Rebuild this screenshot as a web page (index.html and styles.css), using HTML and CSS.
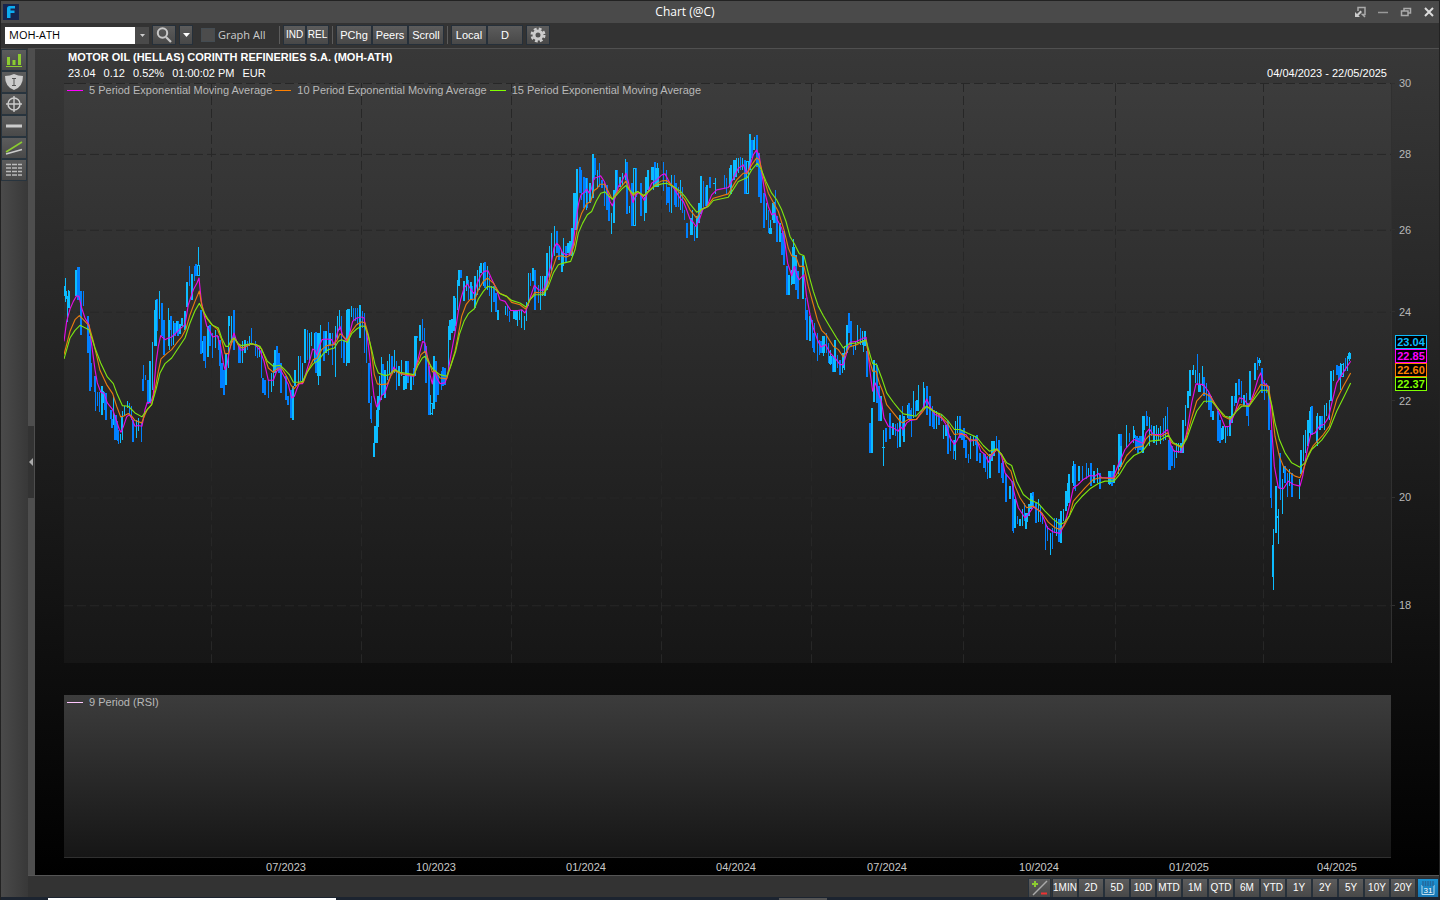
FILE: index.html
```html
<!DOCTYPE html>
<html lang="en">
<head>
<meta charset="utf-8">
<title>Chart (@C)</title>
<link rel="stylesheet" href="styles.css">
</head>
<body>
<div class="window">
  <header class="titlebar">
    <svg class="logo" viewBox="0 0 16 16" aria-hidden="true"><rect width="16" height="16" fill="#17244d"/><path d="M4 14V4.500Q4 2 6.500 2H12V4.500H7.500V6.500H11.500V9H7.500V14Z" fill="#0cabf0"/></svg>
    <h1 class="title">Chart (@C)</h1>
    <div class="window-actions">
      <button class="win-btn" aria-label="Dock"><svg viewBox="0 0 12 12"><path d="M4 5V1.500H11V8.500H8.500L11 11" fill="none" stroke="#aaa" stroke-width="1.500"/><path d="M1 6V11H6L4.500 9.500L8 6L6.500 4.500L3 8Z" fill="#ccc"/></svg></button>
      <button class="win-btn" aria-label="Minimize"><svg viewBox="0 0 12 12"><path d="M1 6.500H11" stroke="#999" stroke-width="1.500"/></svg></button>
      <button class="win-btn" aria-label="Restore"><svg viewBox="0 0 12 12"><path d="M4 4.500V2.500H10.500V7H8.500M1.500 5H8V9.500H1.500Z" fill="none" stroke="#aaa" stroke-width="1.500"/></svg></button>
      <button class="win-btn" aria-label="Close"><svg viewBox="0 0 12 12"><path d="M2 2L10 10M10 2L2 10" stroke="#ddd" stroke-width="2"/></svg></button>
    </div>
  </header>

  <div class="toolbar">
    <div class="combo">
      <input class="symbol" type="text" value="MOH-ATH" aria-label="Symbol">
      <button class="combo-arrow" aria-label="Symbol list"><svg viewBox="0 0 7 4"><path d="M0 0H7L3.500 4Z" fill="#ccc"/></svg></button>
    </div>
    <button class="btn icon-btn" aria-label="Search"><svg viewBox="0 0 16 16"><circle cx="6.500" cy="6" r="4.700" fill="none" stroke="#c8c8c8" stroke-width="2"/><path d="M10 10L15 15" stroke="#c8c8c8" stroke-width="2.200"/></svg></button>
    <button class="btn drop-btn" aria-label="Search options"><svg viewBox="0 0 7 4"><path d="M0 0H7L3.500 4Z" fill="#fff"/></svg></button>
    <label class="graph-all"><input class="check" type="checkbox">Graph All</label>
    <span class="sep"></span>
    <div class="group"><button class="btn short">IND</button><button class="btn short">REL</button></div>
    <span class="sep"></span>
    <div class="group"><button class="btn wide">PChg</button><button class="btn wide">Peers</button><button class="btn wide">Scroll</button></div>
    <span class="sep"></span>
    <div class="group"><button class="btn wide">Local</button><button class="btn wide">D</button></div>
    <button class="btn icon-btn" aria-label="Settings"><svg viewBox="0 0 16 16"><circle cx="8" cy="8" r="4" fill="none" stroke="#ccc" stroke-width="3"/><circle cx="8" cy="8" r="6.300" fill="none" stroke="#ccc" stroke-width="2.400" stroke-dasharray="2.800 2.150"/></svg></button>
  </div>

  <div class="main">
    <nav class="side">
      <button class="side-btn" aria-label="Chart type"><svg viewBox="0 0 18 16"><path d="M1 14.500H17" stroke="#8ccc30" stroke-width="1"/><path d="M3.500 5V13M9 8V13M14.500 2V13" stroke="#8ccc30" stroke-width="3"/></svg></button>
      <button class="side-btn" aria-label="Events"><svg viewBox="0 0 18 16"><path d="M0 2Q5 2 9 0Q13 2 18 2Q18 13 9 16Q0 13 0 2Z" fill="#ccc"/><path d="M7 4.500H11M9 4V12M7 11.500H11" stroke="#555" fill="none"/></svg></button>
      <button class="side-btn" aria-label="Crosshair"><svg viewBox="0 0 18 16"><circle cx="9" cy="8" r="6" fill="none" stroke="#ccc" stroke-width="1.500"/><path d="M1 8H17M9 0V16" stroke="#ccc" stroke-width="1.400"/></svg></button>
      <button class="side-btn" aria-label="Line"><svg viewBox="0 0 18 16"><path d="M1 8H17" stroke="#ccc" stroke-width="3"/></svg></button>
      <button class="side-btn" aria-label="Trend line"><svg viewBox="0 0 18 16"><path d="M1 12L17 2" stroke="#8ccc30" stroke-width="1.500"/><path d="M1 14L17 9.500" stroke="#ccc" stroke-width="1.500"/></svg></button>
      <button class="side-btn" aria-label="Table"><svg viewBox="0 0 18 16"><path d="M1 2.500H17M1 6H17M1 9.500H17M1 13H17" stroke="#bbb" stroke-width="1.500" stroke-dasharray="5 1"/></svg></button>
    </nav>
    <div class="splitter"><button class="collapse" aria-label="Collapse panel"><svg viewBox="0 0 4 8"><path d="M4 0V8L0 4Z" fill="#aaa"/></svg></button></div>

    <section class="chart">
      <div class="info">
        <div>
          <h2 class="name">MOTOR OIL (HELLAS) CORINTH REFINERIES S.A. (MOH-ATH)</h2>
          <div class="quote"><span>23.04</span><span>0.12</span><span>0.52%</span><span>01:00:02 PM</span><span>EUR</span></div>
        </div>
        <div class="range">04/04/2023 - 22/05/2025</div>
      </div>

      <div class="price-row">
        <div class="plot">
          <svg class="drawing" viewBox="64 83 1327 581" preserveAspectRatio="none" role="img" aria-label="Price candles with three moving averages">
            <g class="grid">
              <path d="M64 83.500H1391M64 154.500H1391M64 230.500H1391M64 312.500H1391M64 401.500H1391M64 498.500H1391M64 606.500H1391"/>
              <path d="M211.500 83V664M361.500 83V664M511.500 83V664M661.500 83V664M811.500 83V664M963.500 83V664M1115.500 83V664M1263.500 83V664"/>
            </g>
            <g class="candles" transform="translate(60 230) scale(.33333)">
              <path class="down" d="M70 184V230M106 487V545M112 487V530M118 487V548M133 487V540M138 490V572M153 540V568M156 568V596M172 575V634M175 600V644M208 520V560M214 530V570M244 580V638M250 405V450M256 437V452M312 270V375M333 258V300M334 300V350M345 280V318M354 275V320M388 110V168M403 110V155M408 102V140M436 320V415M450 285V350M457 310V385M475 320V360M480 330V410M492 420V495M562 335V360M574 295V345M586 335V380M592 345V385M605 360V445M615 450V495M625 450V505M657 370V430M678 440V510M684 500V525M721 380V455M742 300V390M768 308V430M792 305V395M805 278V375M817 310V405M844 258V385M852 330V400M880 235V275M886 235V275M893 235V285"/>
              <path class="down mid" d="M63 184V315M85 258V370M89 320V450M94 400V472M91 450V485M104 440V487M220 570V638M250 448V485M264 450V523M291 207V305M306 220V320M423 240V372M432 320V395M522 240V360M609 445V490M651 348V420M664 400V490M693 480V565"/>
              <path class="down thick" d="M55 112V210M167 555V632M486 400V475M540 345V400"/>
              <path class="up" d="M14 168V200M17 145V218M20 183V207M22 200V278M26 182V235M29 183V235M126 468V555M129 485V520M160 500V585M181 612V640M187 545V632M184 560V600M193 530V560M202 513V535M229 570V625M235 565V605M277 338V480M298 183V268M325 235V350M328 270V360M340 275V345M351 275V308M360 283V312M366 265V290M375 245V300M415 52V110M428 335V370M444 290V382M466 300V355M498 370V465M505 258V415M514 258V342M508 258V290M547 335V400M555 330V370M568 320V350M598 350V382M634 430V488M640 400V470M645 360V430M705 420V470M715 378V465M727 400V460M749 310V400M754 308V350M763 310V400M775 312V465M782 285V400M798 305V370M810 310V345M826 290V443M832 258V330M838 240V300M860 240V410M874 228V262M900 225V325"/>
              <path class="up mid" d="M48 120V200M271 395V520M284 240V350M288 210V350M380 158V232M396 132V210M699 470V570M736 297V400"/>
              <path class="up hollow" d="M412 108H419V138H412ZM864 240H869V400H864ZM773 312H780V438H773Z"/>
            </g>
            <g class="candles" transform="translate(360 120) scale(.33333)">
              <path class="down" d="M8 575V625M14 580V700M20 630V730M34 828V910M96 708V760M110 725V810M144 725V790M160 745V795M172 650V655M187 598V660M193 625V700M234 765V825M244 755V810M249 742V800M255 745V795M325 480V540M338 500V545M388 470V530M402 500V548M408 520V578M442 555V590M449 575V608M512 460V500M535 495V550M597 380V420M618 380V430M660 142V220M664 150V240M672 170V265M683 175V265M704 115V180M719 130V200M726 180V205M733 190V258M741 195V270M773 150V215M830 145V230M843 190V290M885 125V200"/>
              <path class="down mid" d="M26 730V850M34 850V898M69 732V825M138 750V770M199 680V790M207 740V885M228 725V848M304 450V475M375 427V505M526 450V570M590 335V400M747 230V305M802 125V282M817 190V318M704 115V165M675 175V220"/>
              <path class="up" d="M2 555V655M42 970V1014M45 920V970M58 770V870M64 712V840M75 750V835M82 725V780M88 703V765M103 690V760M117 740V800M124 720V770M132 770V812M138 723V808M153 770V812M165 650V770M168 650V740M222 708V868M212 825V885M217 850V885M265 620V760M270 600V660M276 598V640M282 530V635M286 535V620M292 480V570M298 450V500M312 485V545M319 470V515M322 470V495M333 488V540M345 468V565M352 450V525M358 440V510M363 430V460M370 430V500M382 440V510M395 500V578M414 570V600M436 558V585M462 575V598M468 570V600M473 575V620M479 572V600M485 570V625M493 590V632M499 548V605M505 460V560M541 470V570M548 470V530M555 470V530M561 400V510M568 380V480M574 340V460M583 320V410M604 395V455M611 355V440M624 370V400M630 365V405M636 325V410M640 220V385M679 175V270M690 190V250M712 150V205M754 280V342M762 210V310M768 150V225M780 170V200M788 160V195M796 118V180M809 258V280M853 230V305M858 170V280M864 150V210M880 140V210M892 130V190M876 140V180"/>
              <path class="up mid" d="M50 870V970M54 830V922M180 615V665M518 445V485M607 400V458M651 148V325M699 102V235M298 450V500"/>
              <path class="up hollow" d="M211 853H217V883H211ZM643 220H648V330H643ZM821 145H827V318H821ZM888 145H894V200H888Z"/>
            </g>
            <g class="candles" transform="translate(660 120) scale(.33333)">
              <path class="down" d="M11 126V212M20 150V255M28 200V278M43 165V255M55 200V262M68 200V280M74 270V300M103 320V365M131 182V262M137 200V260M193 165V208M200 175V225M241 110V150M276 60V115M291 45V140M303 150V250M325 270V340M346 210V310M366 340V405M380 440V525M408 405V510M436 535V600M457 600V685M463 610V700M472 640V725M479 660V705M499 640V700M505 670V730M533 705V745M540 720V765M567 580V640M573 605V680M580 680V705M601 625V665"/>
              <path class="down mid" d="M24 200V250M49 190V262M82 310V355M150 172V205M254 120V222M297 100V232M312 220V325M352 290V368M372 335V437M380 440V525M413 455V538M441 570V660M461 640V698M482 665V700M518 710V758"/>
              <path class="up" d="M34 165V280M61 180V270M97 270V345M111 290V355M117 250V310M122 168V282M141 195V260M166 175V222M162 190V192M208 145V200M213 135V222M222 120V180M229 115V170M236 115V160M248 115V150M283 50V90M319 250V300M331 300V340M337 250V300M360 310V368M387 465V527M394 450V495M400 357V490M408 405V440M450 590V665M490 650V710M511 690V735M525 660V758M548 700V760M554 680V750M561 615V700M586 665V690M593 615V670M607 635V675"/>
              <path class="up mid" d="M92 295V345M122 168V282M222 135V178M228 120V170M270 42V150M283 60V90M343 245V310M428 410V538M523 710V758M548 700V745M614 635V678"/>
              <path class="up hollow" d="M260 125H266V222H260ZM329 325H334V340H329ZM397 382H403V490H397ZM488 652H494V698H488ZM508 710H515V732H508Z"/>
            </g>
            <g class="candles" transform="translate(860 340) scale(.33333)">
              <path class="down" d="M49 70V190M78 265V308M106 252V290M112 250V325M127 200V290M147 190V240M154 205V292M167 185V230M201 138V225M217 200V262M222 210V268M237 220V255M245 225V245M272 290V335M280 300V358M306 270V300M312 265V325M326 345V372M346 290V315M360 340V372M376 345V398M382 350V420M409 290V330M424 370V415M461 440V580M472 530V555M493 490V545M519 458V500M541 500V548M548 520V555M556 550V632M562 560V605M577 565V628M583 537V580M646 375V455M668 380V425M680 372V420M693 372V440M720 400V450M756 395V440"/>
              <path class="down mid" d="M20 35V112M30 250V340M50 75V190M57 140V245M91 220V298M150 210V245M201 138V200M210 170V260M265 245V345M299 228V295M319 300V355M352 285V365M372 345V385M417 300V400M430 365V430M437 405V488M458 425V575M528 490V550M597 540V608M645 375V450M693 375V410"/>
              <path class="up" d="M2 0V15M10 0V38M63 170V245M70 270V380M66 323H75M99 250V285M132 230V308M142 195V235M160 155V235M175 135V215M190 126V195M229 215V268M250 255V298M258 255V290M286 245V362M292 228V280M332 290V358M340 290V320M390 345V415M402 303V350M450 440V480M465 480V565M487 510V560M498 520V568M507 495V530M513 460V510M535 480V548M571 580V648M589 537V590M603 515V610M610 510V545M622 430V500M628 405V490M640 365V440M657 380V425M659 400V415M686 385V410M702 395V430M713 385V430M748 395V438M762 378V430M776 290V405M800 255V304M822 270V296"/>
              <path class="up mid" d="M36 205V340M42 60V188M121 225V322M132 230V290M193 145V205M172 180V215M284 300V335M397 305V365M450 445V475M465 530V560M481 540V560M516 470V500M617 455V515M628 405V490M640 380V430"/>
              <path class="up hollow" d="M496 522H502V545H496ZM746 397H752V432H746ZM777 284H783V380H777Z"/>
            </g>
            <g class="candles" transform="translate(1120 320) scale(.33333)">
              <path class="down" d="M28 340V368M47 345V390M54 355V400M60 350V390M66 350V398M80 275V320M95 315V350M130 295V365M142 262V335M164 390V445M232 102V195M260 190V250M267 220V270M273 230V292M294 275V365M322 320V350M343 230V260M365 185V250M380 220V290M385 250V320M412 112V150M433 180V240M440 190V220M455 330V567M481 400V543M503 460V533M516 462V533M606 290V325M657 140V180M676 115V155"/>
              <path class="down mid" d="M2 343V380M51 350V385M80 290V320M157 380V440M253 172V230M270 240V270M300 300V370M358 178V225M385 250V290M427 145V220M447 200V332M453 330V535M481 400V510M496 440V490M577 258V345M650 135V165"/>
              <path class="down thick" d="M149 360V453"/>
              <path class="up" d="M19 315V385M40 318V370M74 288V330M88 292V380M102 320V370M109 315V375M115 325V365M122 320V372M136 288V360M170 370V415M176 370V400M183 370V400M189 300V400M197 255V320M204 215V265M210 152V230M220 135V165M226 150V190M238 160V215M247 140V200M279 275V300M309 320V358M316 320V370M330 290V350M336 230V310M372 225V260M390 155V240M405 130V180M418 115V140M460 628V812M475 570V675M472 590V596M488 480V585M490 440V460M509 450V500M538 480V540M543 390V465M550 345V425M557 330V400M564 300V380M571 262V350M592 280V380M600 290V330M613 255V330M620 250V290M628 240V300M640 152V185M662 130V210M670 130V165M683 110V155M689 97V125"/>
              <path class="up mid" d="M70 288V402M189 315V385M204 215V255M210 152V200M220 150V165M305 325V360M330 290V345M348 190V250M459 678V773M468 500V640M543 405V465M565 305V350M571 275V340M592 290V370M634 155V245"/>
              <path class="up hollow" d="M236 198H242V215H236ZM415 123H421V130H415ZM665 135H671V170H665ZM686 102H692V118H686Z"/>
            </g>
            <g class="averages">
              <g class="ema5">
                <polyline transform="translate(60 230) scale(.33333)" points="12,335 20,275 30,238 40,215 50,198 57,200 65,235 75,265 87,285 95,345 105,420 112,460 122,487 132,492 142,520 158,540 168,570 178,600 183,608 190,592 200,562 208,555 216,568 225,590 235,588 246,590 255,540 262,518 272,520 280,495 288,400 295,350 302,318 315,330 325,325 335,322 350,308 362,296 375,285 385,225 400,180 411,160 417,145 424,215 432,255 440,288 450,305 458,322 472,318 482,350 490,400 495,420 500,410 508,365 516,330 522,310 530,335 540,360 548,362 558,350 570,342 585,345 600,362 612,395 625,452 640,452 650,425 660,418 672,440 685,465 695,505 703,500 710,480 718,462 728,462 738,430 750,390 758,358 765,362 770,375 778,350 786,330 800,328 815,330 823,345 832,310 840,290 848,318 860,335 868,315 878,275 890,265 905,262"/>
                <polyline transform="translate(360 120) scale(.33333)" points="5,592 12,595 20,640 28,700 35,770 42,830 50,862 58,850 65,828 75,820 85,790 92,765 102,742 110,755 125,762 145,768 162,770 170,735 180,695 188,665 195,670 202,710 210,765 217,793 223,752 230,775 240,792 255,790 262,770 272,710 285,640 295,575 302,540 312,505 322,493 332,508 342,522 352,490 362,468 372,455 384,453 395,478 408,505 420,540 435,545 452,572 470,573 485,570 495,580 503,560 512,530 523,497 535,510 550,512 560,485 572,440 582,385 590,370 598,378 607,398 618,405 630,402 640,370 648,300 656,250 663,225 672,218 680,208 688,220 695,205 702,175 712,172 722,168 733,185 742,212 750,245 757,258 765,235 775,200 785,185 798,160 805,185 812,220 819,248 828,225 837,218 845,228 853,242 862,220 875,190 890,180 905,165"/>
                <polyline transform="translate(660 120) scale(.33333)" points="5,165 15,162 30,190 45,210 60,235 70,245 80,270 90,298 100,308 108,320 118,300 130,265 140,262 155,225 170,210 205,203 220,175 235,145 250,135 260,160 268,145 280,105 290,90 298,110 306,165 315,220 325,260 335,285 345,280 352,300 365,325 375,370 383,430 395,468 403,440 412,470 418,480 425,472 432,465 440,530 450,585 460,625 472,660 483,682 497,675 510,700 525,715 540,735 550,735 560,700 570,668 590,665 605,658 618,652"/>
                <polyline transform="translate(860 340) scale(.33333)" points="18,-8 24,40 30,95 38,155 46,130 55,160 65,190 72,235 85,260 100,265 115,275 122,262 130,270 140,250 150,243 170,240 185,215 200,178 212,205 225,225 245,235 258,255 270,295 283,315 290,305 300,285 318,285 330,305 350,300 362,335 375,345 385,368 398,345 412,328 425,350 435,400 455,425 465,470 475,505 495,535 505,525 520,503 540,515 550,535 562,565 580,578 600,582 615,550 628,500 640,445 655,435 670,420 690,408 705,410 715,402 725,415 760,415 775,375 781,363"/>
                <polyline transform="translate(1120 320) scale(.33333)" points="0,425 15,390 30,372 42,360 70,372 78,340 88,328 100,345 125,345 143,330 152,375 162,395 185,398 200,340 215,250 228,193 250,195 265,215 285,255 300,285 315,322 328,320 345,280 358,235 370,238 387,258 400,225 415,175 422,160 430,190 443,198 450,240 456,340 463,440 475,505 490,508 505,485 520,495 540,500 548,470 560,400 572,345 585,340 600,318 612,315 625,295 638,240 650,190 662,172 675,150 692,125"/>
              </g>
              <g class="ema10">
                <polyline transform="translate(60 230) scale(.33333)" points="12,375 30,305 45,270 58,258 70,270 87,288 100,335 120,422 140,465 158,492 170,530 182,562 190,560 205,552 215,560 225,573 245,580 255,555 262,540 275,525 285,480 295,425 303,388 320,372 335,360 350,340 365,322 378,298 390,255 405,215 418,184 425,225 437,262 455,285 472,298 485,330 495,372 505,372 513,345 522,325 535,345 545,355 560,350 572,343 590,345 605,358 615,385 625,415 640,428 655,415 665,415 680,440 692,465 702,478 715,462 730,458 745,420 760,390 772,385 785,360 800,348 822,345 832,330 840,312 850,320 862,332 875,305 890,285 905,276"/>
                <polyline transform="translate(360 120) scale(.33333)" points="5,606 15,610 25,645 35,700 43,765 52,793 65,795 82,793 92,770 103,752 120,762 145,765 162,768 172,735 183,705 195,695 205,720 217,757 225,752 240,775 260,778 270,745 285,695 295,645 305,590 318,555 330,540 345,538 355,510 370,485 383,475 400,490 418,520 440,530 455,548 480,555 497,568 510,540 525,518 550,520 562,500 575,455 590,410 605,408 620,412 633,405 643,375 655,310 665,280 680,252 692,245 702,212 712,205 720,193 733,193 745,215 757,238 768,222 785,200 798,183 808,210 820,228 833,215 850,230 865,215 885,195 905,183"/>
                <polyline transform="translate(660 120) scale(.33333)" points="5,183 20,182 40,200 60,220 75,240 90,270 110,295 125,268 140,262 160,235 205,222 230,180 250,160 262,160 275,135 290,114 298,120 310,170 325,220 340,248 355,275 372,330 385,385 395,408 408,412 418,440 432,440 445,500 460,555 472,600 485,632 498,645 520,680 535,690 550,712 568,682 590,675 618,660"/>
                <polyline transform="translate(860 340) scale(.33333)" points="18,0 28,60 38,95 48,95 58,130 68,155 80,195 100,220 120,245 128,250 145,240 168,240 185,220 200,200 215,210 240,228 262,250 283,285 305,282 330,300 350,303 370,330 388,350 410,330 425,345 440,380 453,395 465,440 480,475 500,505 520,500 545,520 565,548 585,565 600,570 612,560 628,530 640,485 655,468 675,445 700,420 720,415 762,418 780,388"/>
                <polyline transform="translate(1120 320) scale(.33333)" points="0,448 20,408 42,385 68,380 78,358 90,345 125,350 143,340 155,370 185,385 200,350 215,295 230,245 252,220 270,230 290,260 310,290 330,300 345,280 360,255 387,260 405,225 422,195 445,200 455,260 465,350 478,410 490,440 510,460 525,470 540,475 552,445 565,405 580,378 610,345 628,320 650,240 670,200 692,160"/>
              </g>
              <g class="ema15">
                <polyline transform="translate(60 230) scale(.33333)" points="12,388 30,325 45,302 60,287 72,293 87,300 105,355 122,400 142,442 160,462 172,495 187,528 205,530 225,550 246,562 260,542 275,525 288,480 300,430 315,402 335,385 355,355 375,325 390,280 405,243 418,221 430,245 445,270 458,287 475,295 485,325 497,350 505,350 515,330 523,325 535,342 545,348 560,345 575,342 600,350 610,370 622,395 640,410 660,407 672,418 688,435 700,458 715,458 728,455 740,430 760,402 775,393 790,372 805,360 823,355 835,335 845,330 862,338 875,312 890,298 905,289"/>
                <polyline transform="translate(360 120) scale(.33333)" points="5,619 15,620 25,650 35,690 45,735 55,760 75,768 88,765 103,750 120,758 162,765 175,735 187,715 195,710 207,730 220,750 240,765 260,770 272,740 287,695 298,645 312,605 325,582 343,567 355,538 370,515 383,500 400,503 420,522 440,530 455,542 480,550 498,562 510,540 525,525 550,525 565,500 580,460 595,435 610,430 632,425 645,390 655,340 668,310 682,285 695,275 708,245 722,220 735,216 748,230 757,238 770,225 785,208 798,197 808,210 820,222 832,215 852,227 868,213 885,198 905,192"/>
                <polyline transform="translate(660 120) scale(.33333)" points="5,192 20,190 40,200 60,213 75,230 90,252 110,277 120,272 132,265 145,260 160,242 205,232 235,185 262,173 275,150 292,130 302,145 318,185 335,220 350,240 365,270 378,305 390,350 403,372 418,402 432,408 445,460 460,515 475,560 490,588 510,622 530,655 550,685 568,672 590,670 618,662"/>
                <polyline transform="translate(860 340) scale(.33333)" points="18,2 30,45 38,72 50,75 65,115 80,160 100,188 118,210 130,223 168,230 185,212 200,200 220,215 245,225 265,245 283,270 300,270 325,282 350,293 370,318 388,335 410,328 425,345 440,370 455,378 470,425 490,465 508,480 535,492 555,515 580,540 600,555 612,550 628,530 645,495 665,472 690,448 715,432 735,425 762,425 780,403"/>
                <polyline transform="translate(1120 320) scale(.33333)" points="0,463 20,430 42,408 68,395 90,365 120,362 145,347 160,370 185,382 200,358 215,315 230,275 252,245 275,245 295,268 315,290 333,295 350,275 365,260 387,260 405,235 422,212 443,212 455,255 465,310 478,360 495,400 515,430 540,443 555,430 575,390 605,362 628,330 650,275 670,235 692,190"/>
              </g>
            </g>
          </svg>
          <div class="legend">
            <span class="key magenta">5 Period Exponential Moving Average</span>
            <span class="key orange">10 Period Exponential Moving Average</span>
            <span class="key green">15 Period Exponential Moving Average</span>
          </div>
        </div>
        <div class="scale">
          <span>30</span><span>28</span><span>26</span><span>24</span><span>22</span><span>20</span><span>18</span>
          <div class="tags">
            <b class="tag t-blue">23.04</b><b class="tag t-magenta">22.85</b><b class="tag t-orange">22.60</b><b class="tag t-green">22.37</b>
          </div>
        </div>
      </div>

      <div class="rsi"><span class="key pink">9 Period (RSI)</span></div>
      <div class="dates"><i></i><span>07/2023</span><span>10/2023</span><span>01/2024</span><span>04/2024</span><span>07/2024</span><span>10/2024</span><span>01/2025</span><span>04/2025</span></div>
    </section>

    <div class="periods">
      <button class="btn pm" aria-label="Zoom"><svg viewBox="0 0 16 16"><path d="M1 15L15 1" stroke="#aaa" stroke-width="1.500"/><path d="M0 4H6M3 1V7" stroke="#8ccc30" stroke-width="2"/><path d="M9 13.500H15" stroke="#e33" stroke-width="2"/></svg></button>
      <button class="btn">1MIN</button><button class="btn">2D</button><button class="btn">5D</button><button class="btn">10D</button><button class="btn">MTD</button><button class="btn">1M</button><button class="btn">QTD</button><button class="btn">6M</button><button class="btn">YTD</button><button class="btn">1Y</button><button class="btn">2Y</button><button class="btn">5Y</button><button class="btn">10Y</button><button class="btn">20Y</button>
      <button class="btn calendar" aria-label="Calendar"><svg viewBox="0 0 16 16"><path d="M2 5V14.500H14V5" fill="none" stroke="#b8dcf0"/><path d="M3 1V6M5.500 1V6M8 1V6M10.500 1V6M13 1V6" stroke="#24689c" stroke-width="1.500"/><text x="8" y="12.500" text-anchor="middle" class="cal-day">31</text></svg></button>
    </div>
  </div>
  <footer class="edge"><i class="edge-white"></i><i class="edge-grey"></i></footer>
</div>
</body>
</html>
```
FILE: styles.css
```css
* { box-sizing: border-box; }
body { margin: 0; background: #222; color: #fff; font: 11px/14px "Liberation Sans", Arial, sans-serif; }
h1, h2 { margin: 0; font-size: inherit; }
button { padding: 0; border: 0; color: inherit; font: inherit; }
svg { display: block; }
.window { display: flex; flex-direction: column; height: 100vh; padding: 1px 1px 0; overflow: hidden; }

.titlebar { display: grid; grid-template-columns: 16px 1fr 84px; align-items: center; height: 22px; padding: 0 4px 0 2px; background: #4a4a4a; }
.logo { width: 16px; height: 16px; }
.title { text-align: center; font: 12px/16px "Open Sans", sans-serif; }
.window-actions { display: flex; justify-content: flex-end; gap: 11px; }
.win-btn { width: 12px; height: 12px; background: none; }

.toolbar { display: flex; align-items: center; height: 25px; padding: 0 4px 1px; background: #333; }
.combo { display: flex; height: 17px; margin-right: 4px; }
.symbol { width: 130px; padding: 0 4px 1px; border: 0; background: #fff; color: #000; font: 11px/16px "Open Sans", sans-serif; }
.combo-arrow { display: grid; place-items: center; width: 14px; background: #4a4a4a; }
.combo-arrow svg { width: 5px; height: 3px; }
.btn { display: grid; place-items: center; height: 18px; background: linear-gradient(#5c5c5c, #484848); box-shadow: 0 0 0 1px #26303a; white-space: nowrap; font-size: 10px; line-height: 12px; }
.icon-btn { width: 22px; }
.icon-btn svg { width: 16px; height: 16px; }
.drop-btn { width: 12px; margin: 0 9px 0 5px; }
.drop-btn svg { width: 7px; height: 4px; }
.graph-all { display: flex; align-items: center; gap: 3px; width: 69px; margin-right: 5px; color: #ccc; font: 11px/16px "Open Sans", sans-serif; white-space: nowrap; }
.check { appearance: none; flex: none; width: 14px; height: 14px; margin: 0; border: 1px solid #444c52; background: #4c4c4c; }
.sep { width: 1px; height: 18px; margin: 0 4px; background: #5c5c5c; }
.group { display: flex; gap: 2px; }
.group + .icon-btn { margin-left: 5px; }
.short { width: 21px; }
.wide { width: 34px; font-size: 11px; }

.main { flex: 1; min-height: 0; display: grid; grid-template: 1fr 22px / 27px 7px 1fr; }
.side { grid-row: 1 / 3; display: flex; flex-direction: column; gap: 2px; padding: 2px 2px 2px 1px; background: linear-gradient(90deg, #4a4a4a, #383838); }
.side-btn { display: grid; place-items: center; height: 20px; background: linear-gradient(#5c5c5c, #494949); box-shadow: 0 0 0 1px #28343e; }
.side-btn svg { width: 18px; height: 16px; }
.splitter { display: grid; align-items: center; background: #4e4e4e; }
.collapse { display: grid; place-items: center; height: 72px; width: 6px; background: #333; }
.collapse svg { width: 4px; height: 8px; }

.chart { display: flex; flex-direction: column; min-width: 0; min-height: 0; padding-left: 29px; border-top: 1px solid #505050; background: linear-gradient(#383838, #000); }
.info { display: flex; justify-content: space-between; align-items: flex-end; height: 34px; padding: 0 52px 2px 4px; }
.name { line-height: 16px; white-space: nowrap; }
.quote { display: flex; gap: 8px; line-height: 16px; }
.range { line-height: 16px; }
.price-row { flex: 581 1 0; min-height: 0; display: flex; margin-bottom: 32px; }
.plot { position: relative; flex: 1; background: linear-gradient(#3c3c3c, #161616); }
.drawing { position: absolute; inset: 0; width: 100%; height: 100%; }
.grid { fill: none; stroke: #272727; stroke-dasharray: 9 4; shape-rendering: crispEdges; }
.candles { fill: none; stroke-width: 3.2; shape-rendering: crispEdges; }
.up { stroke: #0cbcff; }
.down { stroke: #0080ff; }
.mid { stroke-width: 6; }
.thick { stroke-width: 9; }
.averages { fill: none; stroke-width: 3.4; stroke-linejoin: round; }
.ema5 { stroke: #e60ce6; }
.ema10 { stroke: #e87c10; }
.ema15 { stroke: #7ee610; }
.legend { position: relative; display: flex; gap: 3px; }
.key { display: flex; align-items: center; gap: 6px; color: #b8b8b8; white-space: nowrap; }
.key::before { content: ""; width: 16px; height: 1px; background: currentColor; }
.legend, .rsi { padding-left: 3px; }
.magenta::before { background: #f0f; }
.orange::before { background: #ff8000; }
.green::before { background: #80ff00; }
.pink::before { background: #ffc8ff; }
.scale { position: relative; display: grid; grid-template-rows: 71fr 76fr 82fr 89fr 97fr 108fr 58fr; align-items: start; width: 48px; border-left: 1px solid #303030; color: #b8b8b8; }
.scale > span { margin-top: -7px; padding-left: 7px; background: linear-gradient(#303030, #303030) left center / 3px 1px no-repeat; }
.tags { position: absolute; top: 43.500%; left: 3px; width: 32px; }
.tag { display: block; height: 14px; border: 1px solid; background: #000; line-height: 12px; text-align: center; }
.t-blue { color: #0cbcff; }
.t-magenta { color: #f0f; }
.t-orange { color: #ff8000; }
.t-green { color: #80ff00; }
.rsi { flex: 162 1 0; min-height: 0; margin-right: 48px; border-bottom: 1px solid #303030; background: linear-gradient(#3c3c3c, #161616); }
.dates { display: grid; grid-template-columns: 147fr 150fr 150fr 150fr 150fr 152fr 152fr 148fr 148fr; height: 17px; margin-right: 28px; color: #c8c8c8; line-height: 18px; text-align: center; }

.periods { grid-column: 2 / 4; display: flex; align-items: flex-start; justify-content: flex-end; gap: 2px; padding: 3px 1px 0; border-top: 1px solid #555; background: #333; }
.periods .btn { width: 24px; }
.periods .pm { width: 21px; margin-right: 1px; }
.periods .calendar { width: 20px; margin-left: 1px; background: linear-gradient(#1c94d4, #1874b0); }
.periods svg { width: 16px; height: 16px; }
.cal-day { fill: #fff; font-size: 8px; }
.edge { display: grid; grid-template-columns: 47px 288px 443px 48px; height: 3px; padding-top: 1px; background: #1c2430; }
.edge-white { grid-column: 2; background: #fff; }
.edge-grey { grid-column: 4; background: #555; }
```
